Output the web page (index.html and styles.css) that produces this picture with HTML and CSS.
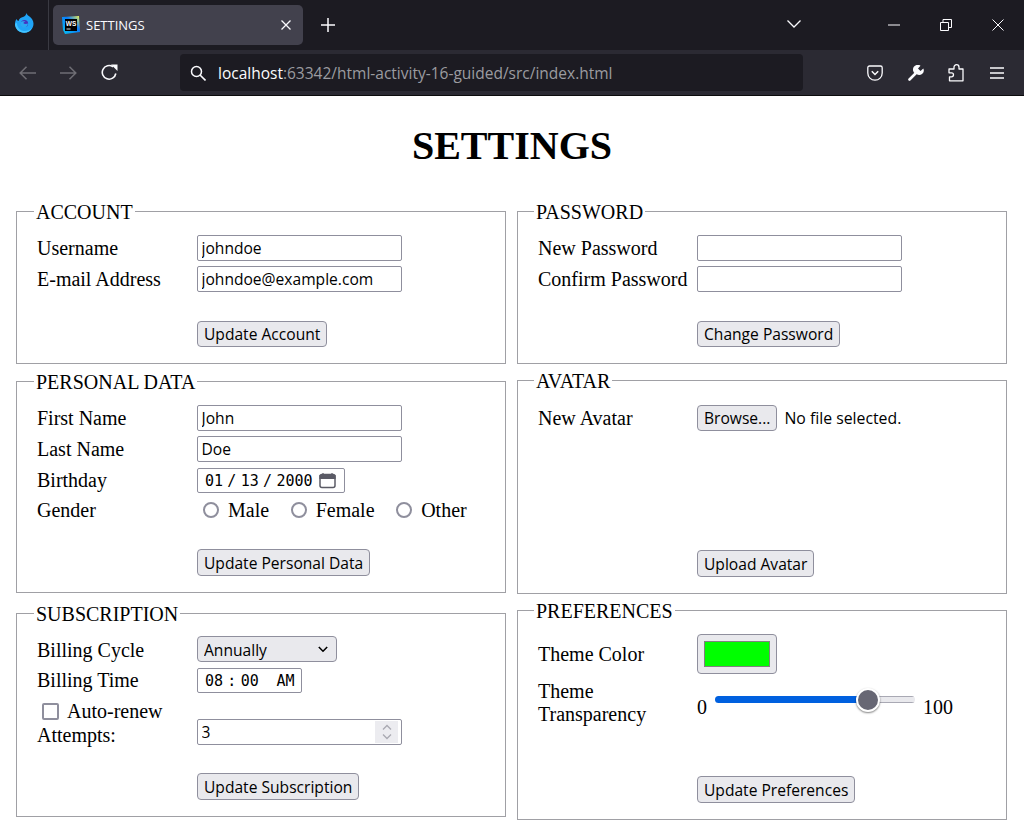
FILE: index.html
```html
<!DOCTYPE html>
<html lang="en">
<head>
  <meta charset="UTF-8">
  <meta name="viewport" content="width=device-width, initial-scale=1.0">
  <title>SETTINGS</title>
  <link rel="stylesheet" href="styles.css">
</head>
<body>

<!-- browser chrome -->
<div class="tabbar">
  <div class="fx-slot">
    <svg width="20" height="20" viewBox="0 0 20 20">
      <path d="M12.500 0c.3 1.500 1.500 2.500 3 3.500C18 5.500 19.500 8 19.500 10.800c0 5-4.100 9-9.300 9C5 19.800 1 15.800 1 10.800c0-2 .6-3.500 1.500-4.800.5 1 1 1.700 2 2 .5-2.500 2.500-3.500 4.500-4 1.500-.5 3-1.500 3.500-4z" fill="#20a4f7"/>
      <path d="M1 10.800c0 5 4 9 9.200 9 3.500 0 6.500-2 8-5-2 2.500-6 4-9.500 3C5.500 17 3 14 3 10z" fill="#42c4ff"/>
      <circle cx="10.500" cy="10.500" r="3.600" fill="#4534c0"/>
      <path d="M6.500 9.500c1.500-1.500 3-1.500 5-.8-1.500.2-2 .8-2 1.500 1 1 2.500 1 4.500.3-.3 2.500-2 4-4 4-2.500 0-4-2.500-3.500-5z" fill="#2aa8f2"/>
    </svg>
  </div>
  <div class="tab">
    <svg class="tab-icon" width="18" height="18" viewBox="0 0 18 18">
      <defs>
        <linearGradient id="wsGrad" x1="0" y1="1" x2="1" y2="0">
          <stop offset="0" stop-color="#07c3f2"/>
          <stop offset="0.6" stop-color="#087cfa"/>
          <stop offset="1" stop-color="#fcf84a"/>
        </linearGradient>
      </defs>
      <path d="M0 1l17-1 1 16-15 2-2-4z" fill="url(#wsGrad)"/>
      <rect x="3" y="3" width="12" height="12" fill="#000"/>
      <rect x="4.500" y="12.500" width="4" height="1" fill="#ddd"/>
      <text x="3.800" y="9.500" class="ws-mark">WS</text>
    </svg>
    <span class="tab-title">SETTINGS</span>
    <svg class="tab-close" width="10" height="10" viewBox="0 0 10 10"><path d="M.5.500l9 9M9.500.500l-9 9" stroke="#fbfbfe" stroke-width="1.300" fill="none"/></svg>
  </div>
  <svg class="new-tab" width="14" height="14" viewBox="0 0 14 14"><path d="M7 0v14M0 7h14" stroke="#fbfbfe" stroke-width="1.500" fill="none"/></svg>
  <div class="tabbar-right">
    <svg class="tab-list" width="14" height="8" viewBox="0 0 14 8"><path d="M.5.500L7 7l6.500-6.500" stroke="#fbfbfe" stroke-width="1.300" fill="none"/></svg>
    <div class="win-btns">
      <svg width="12" height="12" viewBox="0 0 12 12"><path d="M0 6h12" stroke="#fbfbfe" stroke-width="1" fill="none"/></svg>
      <svg width="12" height="12" viewBox="0 0 12 12"><path d="M.5 3.500h8v8h-8zM3 3.500V.5h8.500v8H8.500" stroke="#fbfbfe" stroke-width="1" fill="none"/></svg>
      <svg width="12" height="12" viewBox="0 0 12 12"><path d="M.5.500l11 11M11.500.500l-11 11" stroke="#fbfbfe" stroke-width="1" fill="none"/></svg>
    </div>
  </div>
</div>
<div class="toolbar">
  <div class="nav-btns">
    <svg width="17" height="14" viewBox="0 0 17 14"><path d="M1 7h16M7.500.8L1.200 7l6.300 6.200" stroke="#6f6e75" stroke-width="1.500" fill="none"/></svg>
    <svg width="17" height="14" viewBox="0 0 17 14"><path d="M0 7h16M9.500.8L15.800 7l-6.300 6.200" stroke="#6f6e75" stroke-width="1.500" fill="none"/></svg>
    <svg width="17" height="17" viewBox="0 0 17 17"><path d="M14.800 9.500A6.800 6.800 0 1 1 12 2.800" stroke="#fbfbfe" stroke-width="1.600" fill="none"/><path d="M10 .5h6.500V7z" fill="#fbfbfe"/></svg>
  </div>
  <div class="urlbar">
    <svg width="16" height="16" viewBox="0 0 16 16"><circle cx="6.500" cy="6.500" r="5" stroke="#fbfbfe" stroke-width="1.500" fill="none"/><path d="M10 10l5.500 5.500" stroke="#fbfbfe" stroke-width="1.600"/></svg>
    <span class="url"><span class="url-host">localhost</span>:63342/html-activity-16-guided/src/index.html</span>
  </div>
  <div class="tool-btns">
    <svg width="16" height="16" viewBox="0 0 16 16"><path d="M2.500 1h11A1.700 1.700 0 0 1 15.200 2.700V8A7.200 7.200 0 0 1 .8 8V2.700A1.700 1.700 0 0 1 2.500 1z" stroke="#fbfbfe" stroke-width="1.300" fill="none"/><path d="M4.800 6.300L8 9.500l3.200-3.200" stroke="#fbfbfe" stroke-width="1.500" fill="none"/></svg>
    <svg width="16" height="16" viewBox="0 0 16 16"><path d="M1.500 14.500L8 8" stroke="#fbfbfe" stroke-width="2.600" stroke-linecap="round"/><path d="M7 8.500A4.500 4.500 0 0 1 12.500.7L10 3.500l2.500 2.500 2.800-2.500A4.500 4.500 0 0 1 8.500 9z" fill="#fbfbfe"/></svg>
    <svg width="16" height="18" viewBox="0 0 16 18"><path d="M1 5H6V3.200a2.500 2.500 0 0 1 5 0V5H15V16.800H1.500V12.800H3.500a2 2 0 0 0 0-4H1z" stroke="#fbfbfe" stroke-width="1.300" fill="none" stroke-linejoin="round"/></svg>
    <svg class="menu-icon" width="14" height="12" viewBox="0 0 14 12"><path d="M0 1h14M0 6h14M0 11h14" stroke="#fbfbfe" stroke-width="1.400" fill="none"/></svg>
  </div>
</div>

<div class="page">
  <h1>SETTINGS</h1>

  <div class="columns">
    <div class="column">
      <fieldset class="group">
        <legend>ACCOUNT</legend>
        <div class="row"><label class="name" for="username">Username</label><input class="text-input" type="text" id="username" value="johndoe"></div>
        <div class="row"><label class="name" for="email">E-mail Address</label><input class="text-input" type="text" id="email" value="johndoe@example.com"></div>
        <div class="actions"><button class="btn short-btn">Update Account</button></div>
      </fieldset>

      <fieldset class="group personal">
        <legend>PERSONAL DATA</legend>
        <div class="row"><label class="name" for="first">First Name</label><input class="text-input" type="text" id="first" value="John"></div>
        <div class="row wide-gap"><label class="name" for="last">Last Name</label><input class="text-input" type="text" id="last" value="Doe"></div>
        <div class="row birthday-row"><label class="name" for="birthday">Birthday</label><input class="date-input" type="date" id="birthday" value="2000-01-13"></div>
        <div class="row gender-row">
          <span class="name">Gender</span>
          <div class="radios">
            <label class="radio-label"><input class="radio" type="radio" name="gender">Male</label>
            <label class="radio-label"><input class="radio" type="radio" name="gender">Female</label>
            <label class="radio-label"><input class="radio" type="radio" name="gender">Other</label>
          </div>
        </div>
        <div class="actions"><button class="btn">Update Personal Data</button></div>
      </fieldset>

      <fieldset class="group subscription">
        <legend>SUBSCRIPTION</legend>
        <div class="row wide-gap cycle-row"><label class="name" for="cycle">Billing Cycle</label>
          <select class="select-input" id="cycle"><option>Annually</option><option>Monthly</option></select>
        </div>
        <div class="row"><label class="name" for="time">Billing Time</label><input class="time-input" type="time" id="time" value="08:00"></div>
        <div class="renew-row"><label class="radio-label"><input class="check" type="checkbox">Auto-renew</label></div>
        <div class="row attempts-row"><label class="name" for="attempts">Attempts:</label>
          <div class="number-wrap">
            <input class="text-input number-input" type="number" id="attempts" value="3">
            <span class="spinner">
              <svg width="10" height="18" viewBox="0 0 10 18"><path d="M1 6.500L5 2.500l4 4M1 11.500l4 4 4-4" stroke="#a9a9b2" stroke-width="1.300" fill="none"/></svg>
            </span>
          </div>
        </div>
        <div class="actions subscription-actions"><button class="btn">Update Subscription</button></div>
      </fieldset>
    </div>

    <div class="column right-column">
      <fieldset class="group">
        <legend>PASSWORD</legend>
        <div class="row"><label class="name" for="newpass">New Password</label><input class="text-input" type="password" id="newpass"></div>
        <div class="row"><label class="name" for="confirm">Confirm Password</label><input class="text-input" type="password" id="confirm"></div>
        <div class="actions"><button class="btn short-btn">Change Password</button></div>
      </fieldset>

      <fieldset class="group avatar">
        <legend>AVATAR</legend>
        <div class="row"><span class="name">New Avatar</span><div class="file-pick"><button class="btn">Browse...</button><span class="file-note">No file selected.</span></div></div>
        <div class="actions avatar-actions"><button class="btn">Upload Avatar</button></div>
      </fieldset>

      <fieldset class="group preferences">
        <legend>PREFERENCES</legend>
        <div class="row color-row"><label class="name" for="theme">Theme Color</label><input class="color-input" type="color" id="theme" value="#00ff00"></div>
        <div class="row range-row">
          <label class="name" for="transparency">Theme Transparency</label>
          <div class="range-wrap">
            <span>0</span>
            <input class="range-input" type="range" id="transparency" min="0" max="100" value="80">
            <span>100</span>
          </div>
        </div>
        <div class="actions preferences-actions"><button class="btn">Update Preferences</button></div>
      </fieldset>
    </div>
  </div>
</div>

</body>
</html>
```

FILE: styles.css
```css
* {
  box-sizing: border-box;
}
html, body {
  margin: 0;
  height: 839px;
  overflow: hidden;
}
body {
  font-family: "Liberation Serif", serif;
  font-size: 20px;
  line-height: 23px;
  color: #000;
  background-color: #fff;
}

/* browser chrome */
.tabbar {
  height: 50px;
  display: flex;
  align-items: center;
  background-color: #1c1b22;
}
.fx-slot {
  width: 49px;
  height: 50px;
  display: flex;
  align-items: center;
  justify-content: center;
  border-right: 1px solid #3a3a42;
  padding-bottom: 4px;
}
.tab {
  width: 250px;
  height: 40px;
  margin: 0 0 0 4px;
  display: flex;
  align-items: center;
  padding: 0 12px 0 9px;
  background-color: #42414d;
  border-radius: 5px;
  position: relative;
  top: -0.500px;
}
.tab-icon {
  margin-right: 6px;
}
.ws-mark {
  font-family: "Liberation Sans", sans-serif;
  font-size: 6.500px;
  font-weight: 700;
  fill: #fff;
}
.tab-title {
  flex: 1;
  font-family: "Open Sans", sans-serif;
  font-size: 13px;
  color: #fbfbfe;
  position: relative;
  top: 1px;
}
.new-tab {
  margin-left: 18px;
}
.tabbar-right {
  margin-left: auto;
  display: flex;
  align-items: center;
}
.tab-list {
  margin-right: 87px;
  margin-bottom: 2px;
}
.win-btns {
  display: flex;
  gap: 40px;
  margin-right: 20px;
}
.toolbar {
  height: 46px;
  display: flex;
  align-items: center;
  background-color: #2b2a33;
  border-bottom: 1px solid #0c0c0d;
}
.nav-btns {
  width: 180px;
  padding-left: 19px;
  display: flex;
  align-items: center;
  gap: 24px;
}
.urlbar {
  width: 623px;
  height: 37px;
  display: flex;
  align-items: center;
  gap: 12px;
  padding-left: 10px;
  background-color: #1c1b22;
  border-radius: 4px;
}
.url {
  font-family: "Open Sans", sans-serif;
  font-size: 15.500px;
  color: #9b9ba0;
  position: relative;
  top: 1px;
}
.url-host {
  color: #fbfbfe;
}
.tool-btns {
  flex: 1;
  display: flex;
  align-items: center;
  gap: 24.500px;
  padding-left: 64px;
}
.menu-icon {
  margin-left: 1.500px;
}

/* page */
.page {
  padding: 0 16px;
}
h1 {
  margin: 0;
  height: 103px;
  padding-top: 27px;
  font-size: 40px;
  line-height: 46px;
  font-weight: 700;
  text-align: center;
}
.columns {
  display: grid;
  grid-template-columns: 490px 490px;
  gap: 11px;
}
.column {
  display: flex;
  flex-direction: column;
}
.group {
  margin: 0;
  min-width: 0;
  padding: 11px 20px 16px;
  border: 1px solid #a0a0a5;
}
.group legend {
  margin-left: -3px;
  padding: 2px 2px 0;
}
.right-column .group {
  padding-left: 19px;
}
.right-column .name {
  padding-left: 1px;
}
.personal {
  margin-top: 5px;
}
.subscription {
  margin-top: 8px;
  padding-top: 10px;
}
.avatar {
  margin-top: 4px;
  padding-top: 12px;
}
.preferences {
  margin-top: 4px;
}
.row {
  display: flex;
  align-items: center;
  margin-bottom: 5px;
}
.wide-gap {
  margin-bottom: 6px;
}
.cycle-row .name {
  padding-top: 2px;
}
.birthday-row {
  margin-bottom: 7px;
}
.name {
  width: 160px;
  flex-shrink: 0;
}
.actions {
  padding-left: 160px;
  margin-top: 29px;
}
.subscription-actions {
  margin-top: 28px;
}
.avatar-actions {
  margin-top: 119px;
}
.preferences-actions {
  margin-top: 50px;
}

/* controls */
.text-input, .select-input, .btn, .file-note {
  font-family: "Open Sans", sans-serif;
  font-size: 15.600px;
  color: #000;
}
.text-input {
  width: 205px;
  height: 26px;
  padding: 0 3.500px;
  background-color: #fff;
  border: 1px solid #8f8f9d;
  border-radius: 2px;
  outline: none;
}
.btn {
  height: 27px;
  padding: 1px 6px 0;
  background-color: #e9e9ed;
  border: 1px solid #8f8f9d;
  border-radius: 4px;
  line-height: 23px;
}
.short-btn {
  height: 26px;
  padding-top: 0;
}
.date-input, .time-input {
  height: 25px;
  padding: 0 8px 0 6px;
  background-color: #fff;
  color: #000;
  border: 1px solid #8f8f9d;
  border-radius: 2px;
  font-family: "DejaVu Sans Mono", monospace;
  font-size: 15px;
}
.date-input {
  width: 148px;
}
.time-input {
  width: 105px;
  padding-right: 2px;
}
.date-input::-webkit-datetime-edit-text, .time-input::-webkit-datetime-edit-text {
  padding: 0 3.300px;
}
.date-input::-webkit-calendar-picker-indicator {
  width: 17px;
  height: 17px;
  margin: 0;
  padding: 0;
  background: url("data:image/svg+xml,%3Csvg xmlns='http://www.w3.org/2000/svg' viewBox='0 0 17 17'%3E%3Crect x='1' y='2.500' width='15' height='13' rx='2' fill='none' stroke='%235b5b66' stroke-width='1.500'/%3E%3Cpath d='M1 3.500h15v3H1zM4 1v2M13 1v2' fill='%235b5b66' stroke='%235b5b66' stroke-width='1.200'/%3E%3C/svg%3E") no-repeat center;
}
.time-input::-webkit-calendar-picker-indicator {
  display: none;
}
.select-input {
  appearance: none;
  width: 140px;
  height: 26px;
  padding: 1px 6px 0;
  background: #e9e9ed url("data:image/svg+xml,%3Csvg xmlns='http://www.w3.org/2000/svg' width='10' height='7' viewBox='0 0 10 7'%3E%3Cpath d='M.8 1l4.200 4.200L9.200 1' fill='none' stroke='%23000' stroke-width='1.600'/%3E%3C/svg%3E") no-repeat right 8px center;
  border: 1px solid #8f8f9d;
  border-radius: 4px;
}
.radios {
  display: flex;
  gap: 21.600px;
  padding-left: 6px;
}
.radio-label {
  display: flex;
  align-items: center;
}
.radio {
  appearance: none;
  width: 16px;
  height: 16px;
  margin: 0 9px 0 0;
  background-color: #fff;
  border: 2px solid #8f8f9d;
  border-radius: 50%;
}
.gender-row {
  height: 20px;
  margin-bottom: 0;
}
.renew-row {
  height: 23px;
  margin: 7px 0 -4px;
  padding-left: 5px;
}
.check {
  appearance: none;
  width: 17px;
  height: 17px;
  margin: 0 8px 0 0;
  background-color: #fff;
  border: 2px solid #8f8f9d;
  border-radius: 2px;
}
.attempts-row {
  margin-bottom: 0;
  height: 26px;
}
.attempts-row .name {
  position: relative;
  top: 3px;
}
.number-wrap {
  position: relative;
  width: 205px;
  height: 26px;
}
.number-input {
  appearance: textfield;
  display: block;
}
.number-input::-webkit-inner-spin-button {
  display: none;
}
.spinner {
  position: absolute;
  top: 2px;
  right: 4px;
  width: 23px;
  height: 22px;
  display: flex;
  align-items: center;
  justify-content: center;
  background-color: #ececf0;
}
.file-pick {
  display: flex;
  align-items: center;
  gap: 7px;
}
.file-pick .btn {
  height: 26px;
  padding-top: 0;
}
.file-note {
  font-size: 15.800px;
}
.color-row {
  margin-bottom: 6px;
}
.color-input {
  appearance: none;
  width: 80px;
  height: 40px;
  padding: 6px;
  background-color: #e9e9ed;
  border: 1px solid #8f8f9d;
  border-radius: 4px;
}
.color-input::-webkit-color-swatch-wrapper {
  padding: 0;
}
.color-input::-webkit-color-swatch {
  border: 1px solid #808080;
  border-radius: 0;
}
.range-row {
  margin-bottom: 0;
}
.range-row .name {
  width: 160px;
  padding-right: 50px;
}
.range-wrap {
  display: flex;
  align-items: center;
  gap: 8px;
  margin-top: 8px;
}
.range-input {
  appearance: none;
  width: 200px;
  height: 20px;
  margin: 0;
  position: relative;
  top: -7.500px;
  background: transparent;
}
.range-input::-webkit-slider-runnable-track {
  height: 7px;
  background:
    linear-gradient(to right, #0060df 76%, transparent 76%),
    linear-gradient(#a9a9b4 1px, #e9e9ed 1px, #e9e9ed 6px, #a9a9b4 6px);
  border-radius: 4px;
}
.range-input::-webkit-slider-thumb {
  appearance: none;
  width: 24px;
  height: 24px;
  margin-top: -8.500px;
  background-color: #676774;
  border: 2px solid #fff;
  border-radius: 50%;
  box-shadow: 0 1px 2px rgba(0, 0, 0, 0.5);
}
```
